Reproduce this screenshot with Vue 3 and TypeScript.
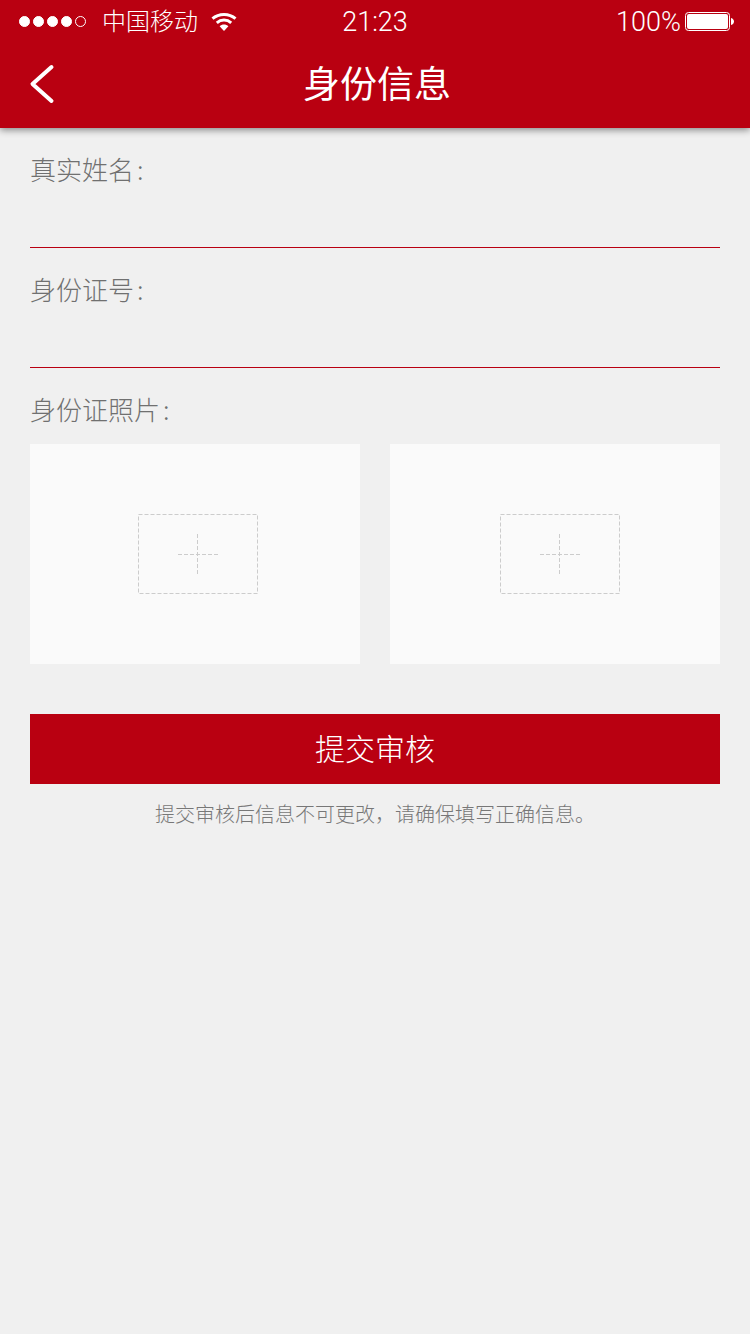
<script setup lang="ts">
interface Field {
  key: string;
  label: string;
}

const fields: Field[] = [
  { key: 'name', label: '真实姓名' },
  { key: 'idNumber', label: '身份证号' }
];

const signalDots = [true, true, true, true, false];
</script>

<template>
  <div class="page">
    <header class="header">
      <div class="status-bar">
        <div class="status-left">
          <div class="signal">
            <span
              v-for="(filled, i) in signalDots"
              :key="i"
              class="dot"
              :class="{ filled }"
            ></span>
          </div>
          <span class="carrier">中国移动</span>
          <svg class="wifi" width="26" height="20" viewBox="0 0 26 20" fill="none">
            <path d="M1.5 6.6C7.8 1 18.2 1 24.5 6.6" stroke="#fff" stroke-width="3" />
            <path d="M5.8 10.8C10 7.2 16 7.2 20.2 10.8" stroke="#fff" stroke-width="3" />
            <path d="M8.6 14.2L13 19L17.4 14.2C15 12 11 12 8.6 14.2Z" fill="#fff" />
          </svg>
        </div>
        <span class="time">21:23</span>
        <div class="status-right">
          <span class="battery-text">100%</span>
          <svg class="battery" width="50" height="20" viewBox="0 0 50 20" fill="none">
            <rect x="0.5" y="0.5" width="44" height="18" rx="3" stroke="#fff" />
            <rect x="2" y="2" width="41" height="15" rx="2" fill="#fff" />
            <path d="M46 6C48 6.5 49 8 49 9.5C49 11 48 12.5 46 13Z" fill="#fff" />
          </svg>
        </div>
      </div>
      <nav class="navbar">
        <svg class="back" width="30" height="44" viewBox="0 0 30 44" fill="none">
          <path
            d="M22.5 5L3.5 22L22.5 39"
            stroke="#fff"
            stroke-width="4"
            stroke-linecap="round"
            stroke-linejoin="round"
          />
        </svg>
        <h1 class="title">身份信息</h1>
      </nav>
    </header>

    <main class="content">
      <div v-for="field in fields" :key="field.key" class="field">
        <label class="label" :for="field.key">{{ field.label }}<span class="colon">:</span></label>
        <input :id="field.key" class="input" type="text" />
      </div>

      <div class="label photo-label">身份证照片<span class="colon">:</span></div>
      <div class="photos">
        <div class="photo photo-front">
          <svg width="120" height="80" viewBox="0 0 120 80" fill="none">
            <rect x="0.5" y="0.5" width="119" height="79" stroke="#ccc" stroke-dasharray="4 2" />
            <path d="M40 40.5H80M59.5 20V60" stroke="#ccc" stroke-dasharray="4 2" />
          </svg>
        </div>
        <div class="photo photo-back">
          <svg width="120" height="80" viewBox="0 0 120 80" fill="none">
            <rect x="0.5" y="0.5" width="119" height="79" stroke="#ccc" stroke-dasharray="4 2" />
            <path d="M40 40.5H80M59.5 20V60" stroke="#ccc" stroke-dasharray="4 2" />
          </svg>
        </div>
      </div>

      <button class="submit" type="button">提交审核</button>
      <p class="hint">提交审核后信息不可更改，请确保填写正确信息。</p>
    </main>
  </div>
</template>

<style>
html,
body {
  margin: 0;
  background: #f0f0f0;
}
</style>

<style scoped>
.page {
  min-height: 1334px;
  background: #f0f0f0;
  font-family: 'Noto Sans CJK SC', 'Liberation Sans', sans-serif;
}

.header {
  background: #b90011;
  color: #fff;
  box-shadow: 0 2px 7px rgba(0, 0, 0, 0.45);
}

.status-bar {
  display: grid;
  grid-template-columns: 1fr auto 1fr;
  align-items: center;
  height: 38px;
  padding: 2px 15px 0;
  font-family: Roboto, 'Noto Sans CJK SC', sans-serif;
  font-weight: 300;
  font-size: 27px;
}

.status-left,
.status-right,
.signal {
  display: flex;
  align-items: center;
}

.status-right {
  justify-content: flex-end;
}

.signal {
  gap: 3px;
  margin-left: 4px;
}

.dot {
  box-sizing: border-box;
  width: 11px;
  height: 11px;
  border: 1px solid #fff;
  border-radius: 50%;
}

.dot.filled {
  background: #fff;
}

.carrier {
  margin-left: 16px;
  margin-bottom: 4px;
  font-family: 'Noto Sans CJK SC', sans-serif;
  font-size: 24px;
}

.wifi {
  margin-left: 13px;
}

.battery {
  margin-left: 4px;
}

.navbar {
  position: relative;
  display: flex;
  align-items: center;
  justify-content: center;
  height: 88px;
}

.back {
  position: absolute;
  left: 29px;
  top: 22px;
}

.title {
  margin: 0 0 4px 4px;
  font-size: 37px;
  font-weight: 400;
  line-height: 84px;
}

.content {
  display: flex;
  flex-direction: column;
  padding: 0 30px;
}

.field {
  display: flex;
  flex-direction: column;
  padding-top: 23px;
}

.label {
  color: #707070;
  font-size: 26px;
  font-weight: 300;
  line-height: 36px;
}

.colon {
  margin-left: 3px;
}

.input {
  box-sizing: content-box;
  height: 60px;
  padding: 0;
  border: 0;
  border-bottom: 1px solid #b90011;
  background: transparent;
  outline: none;
}

.photo-label {
  margin-top: 23px;
}

.photos {
  display: grid;
  grid-template-columns: 330px 330px;
  gap: 30px;
  margin-top: 17px;
}

.photo {
  display: flex;
  align-items: center;
  height: 220px;
  background: #fafafa;
}

.photo-front {
  padding-left: 108px;
}

.photo-back {
  padding-left: 110px;
}

.submit {
  height: 70px;
  margin-top: 50px;
  padding: 0 0 4px;
  border: 0;
  background: #b90011;
  color: #fff;
  font-family: inherit;
  font-size: 30px;
  font-weight: 300;
}

.hint {
  margin: 15px 0 0;
  color: #777;
  font-size: 20px;
  font-weight: 300;
  line-height: 30px;
  text-align: center;
}
</style>
